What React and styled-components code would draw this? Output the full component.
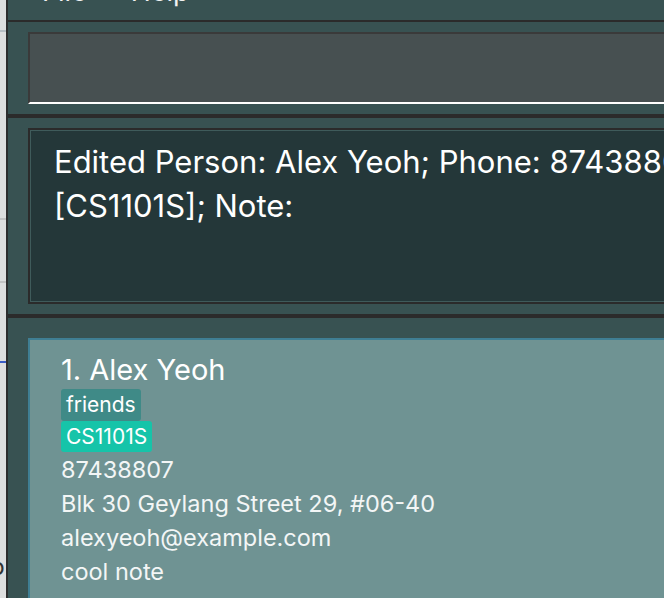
import styled, { createGlobalStyle } from "styled-components";

const GlobalStyle = createGlobalStyle`
  html, body {
    margin: 0;
    padding: 0;
    width: 664px;
    height: 598px;
    overflow: hidden;
    background: #385252;
  }
  * { box-sizing: border-box; }
`;

const person = {
    index: 1,
    name: "Alex Yeoh",
    tags: [
        { label: "friends", tone: "#3f8a87" },
        { label: "CS1101S", tone: "#16c4a9" },
    ],
    phone: "87438807",
    address: "Blk 30 Geylang Street 29, #06-40",
    email: "alexyeoh@example.com",
    note: "cool note",
};

function App() {
    return (
        <Screen>
            <GlobalStyle />
            <BehindWindow>
                <StripLine $top={30} $color="#b7bec3" />
                <StripLine $top={186} $color="#c3c3c3" />
                <StripLine $top={61} $color="#c3c3c3" />
                <StripLine $top={78} $color="#3b5cc4" />
                <StripText>p</StripText>
            </BehindWindow>

            <Window>
                <MenuBar>
                    <MenuItem>File</MenuItem>
                    <MenuItem>Help</MenuItem>
                </MenuBar>
                <Divider $size={2} />

                <Section>
                    <CommandBox />
                </Section>
                <Divider $size={4} />

                <Section>
                    <ResultBox>
                        <ResultText>
                            Edited Person: Alex Yeoh; Phone: 87438807; Email: alexyeoh@example.com; Address: Blk 30 Geylang Street 29, #06-40; Tags: [friends]
                            <br />
                            [CS1101S]; Note:
                        </ResultText>
                    </ResultBox>
                </Section>
                <Divider $size={4} />

                <ListSection>
                    <Card>
                        <Name>{person.index}. {person.name}</Name>
                        <Tags>
                            {person.tags.map((t) => (
                                <Tag key={t.label} $tone={t.tone}>{t.label}</Tag>
                            ))}
                        </Tags>
                        <Detail>{person.phone}</Detail>
                        <Detail>{person.address}</Detail>
                        <Detail>{person.email}</Detail>
                        <Detail>{person.note}</Detail>
                    </Card>
                </ListSection>
            </Window>
        </Screen>
    );
}

export default App;

const Screen = styled.div`
  display: flex;
  width: 664px;
  height: 598px;
  overflow: hidden;
  font-family: Inter, "Noto Sans", sans-serif;
`;

const BehindWindow = styled.div`
  flex: 0 0 6px;
  display: flex;
  flex-direction: column;
  background: #dedede;
  overflow: hidden;
`;

const StripLine = styled.div`
  height: 2px;
  margin-top: ${(p) => p.$top}px;
  background: ${(p) => p.$color};
  flex-shrink: 0;
`;

const StripText = styled.div`
  margin-top: 189px;
  margin-left: -10px;
  font-size: 24px;
  line-height: 30px;
  color: #333;
`;

const Window = styled.div`
  flex: 0 0 900px;
  display: flex;
  flex-direction: column;
  background: #385252;
  border-left: 2px solid #2d2d2d;
`;

const MenuBar = styled.div`
  height: 20px;
  display: flex;
  align-items: flex-start;
  gap: 44px;
  padding-left: 34px;
  overflow: hidden;
  flex-shrink: 0;
`;

const MenuItem = styled.span`
  margin-top: -21px;
  font-size: 27px;
  line-height: 26px;
  color: #f2f2f2;
`;

const Divider = styled.div`
  height: ${(p) => p.$size}px;
  background: #2b2b2b;
  flex-shrink: 0;
`;

const Section = styled.div`
  padding: 10px 20px;
  flex-shrink: 0;
`;

const CommandBox = styled.div`
  height: 72px;
  background: #475051;
  border: 2px solid #3a3a3a;
  border-bottom: 2px solid #ffffff;
`;

const ResultBox = styled.div`
  height: 176px;
  background: #243739;
  border: 2px solid #2b2b2b;
  box-shadow: inset 0 0 0 1px #3f5b5b;
  padding: 10px 24px;
  overflow: hidden;
`;

const ResultText = styled.div`
  font-size: 31px;
  line-height: 44px;
  color: #ffffff;
  white-space: nowrap;
`;

const ListSection = styled.div`
  flex: 1;
  padding: 20px;
`;

const Card = styled.div`
  background: #6f9393;
  border: 2px solid #3f7e93;
  padding: 12px 31px 20px;
  display: flex;
  flex-direction: column;
  align-items: flex-start;
`;

const Name = styled.div`
  font-size: 29px;
  line-height: 35px;
  color: #ffffff;
`;

const Tags = styled.div`
  display: flex;
  flex-direction: column;
  align-items: flex-start;
  margin-top: 2px;
  margin-bottom: 1px;
`;

const Tag = styled.span`
  background: ${(p) => p.$tone};
  color: #ffffff;
  font-size: 21px;
  line-height: 31.5px;
  padding: 0 5px;
  border-radius: 3px;
`;

const Detail = styled.div`
  font-size: 23.5px;
  line-height: 34px;
  color: #f3f6f6;
`;
